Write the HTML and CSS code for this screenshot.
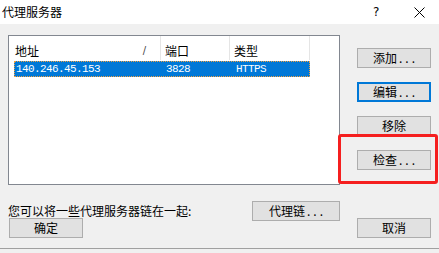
FILE: index.html
```
<!DOCTYPE html>
<html lang="zh">
<head>
<meta charset="utf-8">
<title>代理服务器</title>
<link rel="stylesheet" href="styles.css">
</head>
<body>
<div class="window">
  <div class="titlebar">
    <span class="title">代理服务器</span>
    <span class="help">?</span>
    <span class="close"><svg width="11" height="11" viewBox="0 0 11 11"><path d="M0.5 0.5 L10.5 10.5 M10.5 0.5 L0.5 10.5" stroke="#000" stroke-width="1" fill="none"/></svg></span>
  </div>
  <div class="body">
    <div class="top">
      <div class="list">
        <div class="header">
          <div class="col c1"><span>地址</span><span class="sort">/</span></div>
          <div class="col c2">端口</div>
          <div class="col c3">类型</div>
        </div>
        <div class="row selected">
          <div class="cell c1">140.246.45.153</div>
          <div class="cell c2">3828</div>
          <div class="cell c3">HTTPS</div>
        </div>
      </div>
      <div class="side">
        <button class="btn">添加<span class="dots">...</span></button>
        <button class="btn default">编辑<span class="dots">...</span></button>
        <button class="btn">移除</button>
        <button class="btn">检查<span class="dots">...</span></button>
      </div>
    </div>
    <div class="chain">
      <span class="hint">您可以将一些代理服务器链在一起:</span>
      <button class="btn wide">代理链<span class="dots">...</span></button>
    </div>
    <div class="actions">
      <button class="btn">确定</button>
      <button class="btn">取消</button>
    </div>
  </div>
  <div class="footer"></div>
  <div class="highlight"></div>
</div>
</body>
</html>
```

FILE: styles.css
```
* { box-sizing: border-box; }
html, body { margin: 0; padding: 0; }
body {
  width: 439px;
  height: 253px;
  background: #f0f0f0;
  font-family: "Noto Sans CJK SC", "Noto Sans", sans-serif;
  font-size: 12px;
  color: #000;
  overflow: hidden;
}
.window {
  position: relative;
  width: 439px;
  height: 253px;
  display: flex;
  flex-direction: column;
}
.titlebar {
  height: 24px;
  background: #fff;
  display: flex;
  align-items: center;
  padding-left: 2px;
  flex: none;
}
.title {
  font-size: 12px;
  line-height: 24px;
  flex: 1;
}
.help {
  font-family: "DejaVu Sans", sans-serif;
  font-size: 12px;
  width: 14px;
  margin-right: 27px;
}
.close {
  display: flex;
  margin-right: 14px;
}
.body {
  flex: 1;
  padding: 11px 0 0 8px;
}
.top {
  display: flex;
}
.list {
  width: 332px;
  height: 150px;
  background: #fff;
  border: 1px solid #828790;
  padding-left: 5px;
}
.header {
  display: flex;
  height: 24px;
}
.col {
  display: flex;
  align-items: center;
  border-right: 1px solid #e5e5e5;
  padding-top: 4px;
}
.c1 { width: 147px; }
.c2 { width: 69px; }
.c3 { width: 80px; }
.header .c1 { padding-left: 1px; padding-right: 14px; justify-content: space-between; }
.header .c2 { padding-left: 4px; }
.header .c3 { padding-left: 4px; }
.sort {
  font-family: "DejaVu Sans", sans-serif;
  font-size: 10px;
  color: #444;
}
.row {
  display: flex;
  height: 16px;
  margin-top: 1px;
  width: 296px;
}
.row.selected {
  background: #0078d7;
  color: #fff;
  outline: 1px dotted #f0a040;
  outline-offset: -1px;
}
.cell {
  font-family: "Liberation Mono", "DejaVu Sans Mono", monospace;
  font-size: 11px;
  letter-spacing: -0.6px;
  line-height: 16px;
}
.row .c1 { padding-left: 2px; }
.row .c2 { padding-left: 5px; }
.row .c3 { padding-left: 6px; }
.side {
  display: flex;
  flex-direction: column;
  gap: 14px;
  margin-left: 17px;
  padding-top: 13px;
}
.btn {
  width: 74px;
  height: 20px;
  padding: 0;
  margin: 0;
  background: #e1e1e1;
  border: 1px solid #adadad;
  font-family: "Noto Sans CJK SC", "Noto Sans", sans-serif;
  font-size: 12px;
  line-height: 16px;
  color: #000;
  display: flex;
  align-items: center;
  justify-content: center;
}
.btn.default {
  border: 2px solid #0078d7;
}
.dots {
  letter-spacing: 3px;
  margin-left: 2px;
  margin-right: -3px;
}
.btn.wide { width: 88px; }
.chain {
  width: 332px;
  margin-top: 16px;
  display: flex;
  justify-content: space-between;
  align-items: center;
}
.hint { line-height: 20px; }
.actions {
  display: flex;
  justify-content: space-between;
  width: 423px;
  margin-top: -3px;
  padding-left: 1px;
}
.footer {
  height: 5px;
  border-top: 1px solid #a0a0a0;
  background: #f0f0f0;
  flex: none;
}
.highlight {
  position: absolute;
  left: 338px;
  top: 134px;
  width: 100px;
  height: 50px;
  border: 3px solid #f51f1f;
  border-radius: 3px;
}
```
